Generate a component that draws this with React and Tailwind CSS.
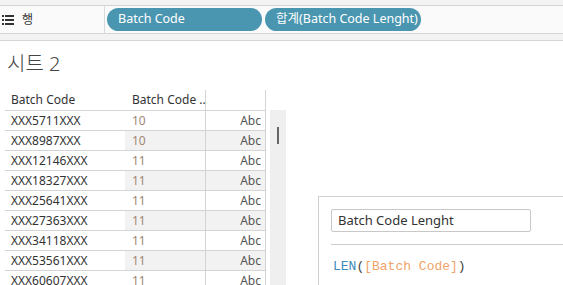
import React from "react";

const rows = [
  ["XXX5711XXX", "10"],
  ["XXX8987XXX", "10"],
  ["XXX12146XXX", "11"],
  ["XXX18327XXX", "11"],
  ["XXX25641XXX", "11"],
  ["XXX27363XXX", "11"],
  ["XXX34118XXX", "11"],
  ["XXX53561XXX", "11"],
  ["XXX60607XXX", "11"],
];

const ListIcon = () => (
  <svg width="12" height="10" viewBox="0 0 12 10" fill="#333">
    <rect x="0" y="0" width="2" height="2" />
    <rect x="3" y="0" width="9" height="2" />
    <rect x="0" y="4" width="2" height="2" />
    <rect x="3" y="4" width="9" height="2" />
    <rect x="0" y="8" width="2" height="2" />
    <rect x="3" y="8" width="9" height="2" />
  </svg>
);

const Pill = ({ children, w }) => (
  <div
    className={`flex h-[23px] items-center whitespace-nowrap rounded-full bg-[#4a96b1] pl-[11px] text-[12.5px] text-white ${w}`}
  >
    {children}
  </div>
);

export default function App() {
  return (
    <div
      className="relative h-[285px] w-[563px] overflow-hidden bg-white text-[#333]"
      style={{ fontFamily: '"Noto Sans", "Noto Sans CJK KR", sans-serif' }}
    >
      {/* top shelf area */}
      <div className="h-[6px] border-b border-[#d4d4d4] bg-[#f3f3f3]" />
      <div className="flex h-[28px] items-center border-b border-[#d4d4d4] bg-[#fafafa]">
        <div className="flex h-full w-[105px] items-center gap-[8px] border-r border-[#d9d9d9] pl-[2px]">
          <ListIcon />
          <span className="text-[12px] leading-none">행</span>
        </div>
        <div className="ml-[2px] flex gap-[3px]">
          <Pill w="w-[155px]">Batch Code</Pill>
          <Pill w="w-[156px]">합계(Batch Code Lenght)</Pill>
        </div>
      </div>
      <div className="h-[7px] border-b border-[#d4d4d4] bg-[#f3f3f3]" />

      {/* sheet */}
      <div className="pl-[7px] pt-[10px] text-[20px] font-light leading-[26px] text-[#444]">
        시트 2
      </div>

      <div className="mt-[13px] flex">
        <div className="ml-[5px] w-[261px] whitespace-nowrap text-[12px]">
          <div className="flex h-[21px] border-b border-[#d4d4d4]">
            <div className="flex w-[120px] items-center pl-[6px]">Batch Code</div>
            <div className="flex w-[81px] items-center overflow-hidden border-r border-[#d4d4d4] pl-[7px]">
              Batch Code ..
            </div>
            <div className="w-[60px] border-r border-[#d4d4d4]" />
          </div>
          {rows.map(([code, len], i) => {
            const band = i % 2 === 1 ? "bg-[#f2f2f2]" : "bg-white";
            return (
              <div key={code} className="flex h-[20px] border-b border-[#d4d4d4]">
                <div className="flex w-[120px] items-center pl-[6px] text-[#333]">{code}</div>
                <div
                  className={`flex w-[81px] items-center border-r border-[#d4d4d4] pl-[7px] text-[#a08772] ${band}`}
                >
                  {len}
                </div>
                <div
                  className={`flex w-[60px] items-center justify-end border-r border-[#d4d4d4] pr-[4px] text-[#555] ${band}`}
                >
                  Abc
                </div>
              </div>
            );
          })}
        </div>
        <div className="ml-[4px] mt-[20px] h-[200px] w-[16px] bg-[#efefef] pl-[7px] pt-[17px]">
          <div className="h-[17px] w-[2px] bg-[#666]" />
        </div>
      </div>

      {/* calculation editor */}
      <div className="absolute bottom-0 left-[318px] right-0 top-[196px] border-l border-t border-[#cfcfcf] bg-white pl-[12px] pt-[12px]">
        <div className="flex h-[23px] w-[200px] items-center rounded-[2px] border border-[#c8c8c8] pl-[6px] text-[13px] text-[#333]">
          Batch Code Lenght
        </div>
        <div className="mt-[12px] h-px bg-[#cccccc]" />
        <div
          className="mt-[14px] pl-[2px] text-[13px] leading-[16px]"
          style={{ fontFamily: '"Liberation Mono", monospace' }}
        >
          <span className="text-[#3d8bb8]">LEN</span>
          <span className="text-[#444]">(</span>
          <span className="text-[#f0a36a]">[Batch Code]</span>
          <span className="text-[#444]">)</span>
        </div>
      </div>
    </div>
  );
}
